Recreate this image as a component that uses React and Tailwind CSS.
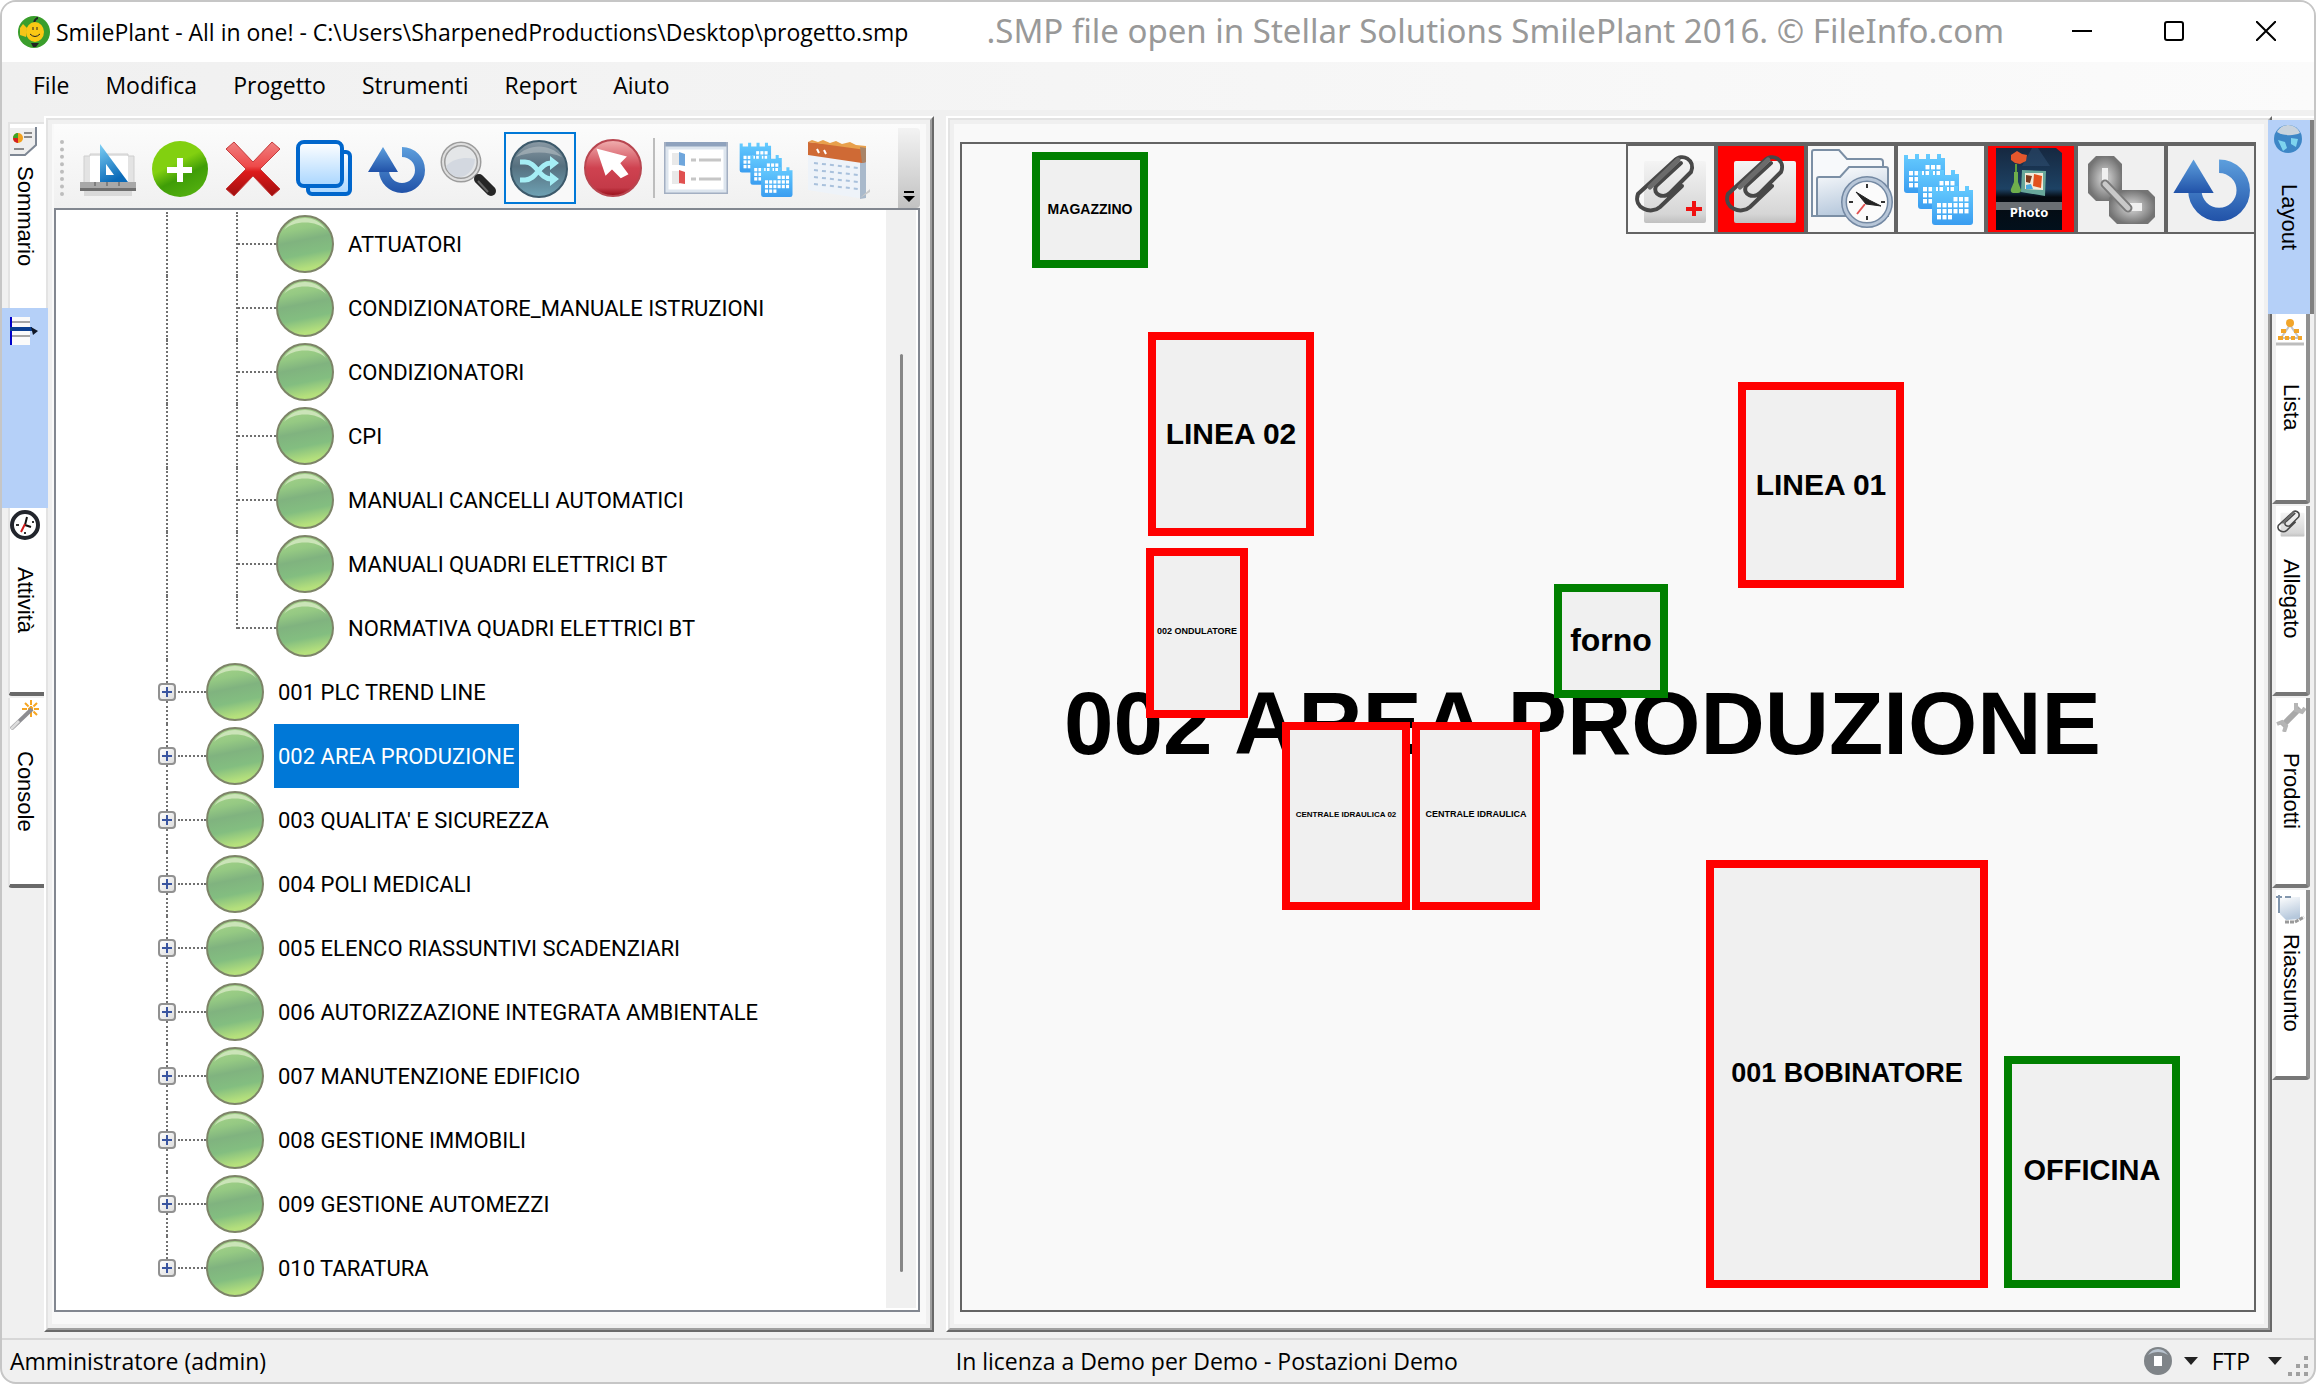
import React, { useState } from 'react';
import clsx from 'clsx';

const menuItems = ['File', 'Modifica', 'Progetto', 'Strumenti', 'Report', 'Aiuto'];

const documents = [
  'ATTUATORI',
  'CONDIZIONATORE_MANUALE ISTRUZIONI',
  'CONDIZIONATORI',
  'CPI',
  'MANUALI CANCELLI AUTOMATICI',
  'MANUALI QUADRI ELETTRICI BT',
  'NORMATIVA QUADRI ELETTRICI BT',
];

const areas = [
  '001 PLC TREND LINE',
  '002 AREA PRODUZIONE',
  "003 QUALITA' E SICUREZZA",
  '004 POLI MEDICALI',
  '005 ELENCO RIASSUNTIVI SCADENZIARI',
  '006 AUTORIZZAZIONE INTEGRATA AMBIENTALE',
  '007 MANUTENZIONE EDIFICIO',
  '008 GESTIONE IMMOBILI',
  '009 GESTIONE AUTOMEZZI',
  '010 TARATURA',
];

// machines placed on the plant layout
const nodes = [
  { label: 'MAGAZZINO', place: 'left-[70px] top-[8px] w-[116px] h-[116px] border-[#008000] text-[14px]' },
  { label: 'LINEA 02', place: 'left-[186px] top-[188px] w-[166px] h-[204px] border-[#ff0000] text-[30px]' },
  { label: '002 ONDULATORE', place: 'left-[184px] top-[404px] w-[102px] h-[170px] border-[#ff0000] text-[9px]' },
  { label: 'forno', place: 'left-[592px] top-[440px] w-[114px] h-[114px] border-[#008000] text-[32px]' },
  { label: 'LINEA 01', place: 'left-[776px] top-[238px] w-[166px] h-[206px] border-[#ff0000] text-[30px]' },
  { label: 'CENTRALE IDRAULICA 02', place: 'left-[320px] top-[578px] w-[128px] h-[188px] border-[#ff0000] text-[8px]' },
  { label: 'CENTRALE IDRAULICA', place: 'left-[450px] top-[578px] w-[128px] h-[188px] border-[#ff0000] text-[9px]' },
  { label: '001 BOBINATORE', place: 'left-[744px] top-[716px] w-[282px] h-[428px] border-[#ff0000] text-[27px]' },
  { label: 'OFFICINA', place: 'left-[1042px] top-[912px] w-[176px] h-[232px] border-[#008000] text-[29px]' },
];

function Gradients() {
  return (
    <svg width="0" height="0" className="absolute" aria-hidden="true">
      <defs>
        <linearGradient id="ball" x1="0" y1="0" x2="0.2" y2="1">
          <stop offset="0" stopColor="#a9d48b" />
          <stop offset="0.3" stopColor="#95c983" />
          <stop offset="0.5" stopColor="#80b37f" />
          <stop offset="0.75" stopColor="#83be80" />
          <stop offset="1" stopColor="#b5e07c" />
        </linearGradient>
        <linearGradient id="green" x1="0.2" y1="0" x2="0.7" y2="1">
          <stop offset="0.4" stopColor="#82d010" />
          <stop offset="0.65" stopColor="#3f9d07" />
          <stop offset="1" stopColor="#54b010" />
        </linearGradient>
        <linearGradient id="red" x1="0" y1="0" x2="0" y2="1">
          <stop offset="0" stopColor="#f08080" />
          <stop offset="0.45" stopColor="#ee4a4a" />
          <stop offset="0.55" stopColor="#dd1a1a" />
          <stop offset="1" stopColor="#a01010" />
        </linearGradient>
        <linearGradient id="redball" x1="0" y1="0" x2="0" y2="1">
          <stop offset="0" stopColor="#f0b0b0" />
          <stop offset="0.5" stopColor="#cf4250" />
          <stop offset="0.85" stopColor="#c43a48" />
          <stop offset="1" stopColor="#980c18" />
        </linearGradient>
        <linearGradient id="slate" x1="0" y1="0" x2="0" y2="1">
          <stop offset="0" stopColor="#8b9aa5" />
          <stop offset="0.45" stopColor="#56707f" />
          <stop offset="1" stopColor="#6fa3b5" />
        </linearGradient>
        <linearGradient id="sheet" x1="0" y1="0" x2="0" y2="1">
          <stop offset="0" stopColor="#ffffff" />
          <stop offset="1" stopColor="#a9d6ff" />
        </linearGradient>
        <linearGradient id="arrow" x1="0" y1="0" x2="0" y2="1">
          <stop offset="0" stopColor="#5d9fdd" />
          <stop offset="1" stopColor="#2152a8" />
        </linearGradient>
        <linearGradient id="arc" gradientUnits="userSpaceOnUse" x1="0" y1="15" x2="0" y2="61">
          <stop offset="0" stopColor="#5d9fdd" />
          <stop offset="1" stopColor="#2152a8" />
        </linearGradient>
        <linearGradient id="tri" x1="0" y1="0" x2="0.4" y2="1">
          <stop offset="0" stopColor="#7fd0f5" />
          <stop offset="1" stopColor="#0a6ab8" />
        </linearGradient>
        <linearGradient id="cal" x1="0" y1="0" x2="0" y2="1">
          <stop offset="0" stopColor="#66ccff" />
          <stop offset="1" stopColor="#3a9df0" />
        </linearGradient>
        <linearGradient id="page" x1="0" y1="0" x2="0" y2="1">
          <stop offset="0" stopColor="#f4f4f4" />
          <stop offset="0.85" stopColor="#d6d6d6" />
          <stop offset="1" stopColor="#c0c0c0" />
        </linearGradient>
        <linearGradient id="folder" x1="0" y1="0" x2="0.3" y2="1">
          <stop offset="0" stopColor="#ffffff" />
          <stop offset="1" stopColor="#b6c8dc" />
        </linearGradient>
        <radialGradient id="steel">
          <stop offset="0.3" stopColor="#bdbdbd" />
          <stop offset="1" stopColor="#747474" />
        </radialGradient>
        <linearGradient id="night" x1="0" y1="0" x2="0" y2="1">
          <stop offset="0" stopColor="#162840" />
          <stop offset="0.5" stopColor="#1d4264" />
          <stop offset="0.6" stopColor="#050a10" />
          <stop offset="1" stopColor="#02101c" />
        </linearGradient>
      </defs>
    </svg>
  );
}

function Icon({ size = 'size-[72px]', box = '0 0 72 72', children }) {
  return (
    <svg className={clsx('block shrink-0', size)} viewBox={box} fill="none" aria-hidden="true">
      {children}
    </svg>
  );
}

function RefreshShape() {
  return (
    <>
      <path d="M42 20a18 18 0 1 1-18 18" stroke="url(#arc)" strokeWidth="10" />
      <path d="M23 15l15 25H8z" fill="url(#arrow)" />
    </>
  );
}

function CalendarSheet({ x, y }) {
  const cells = [];
  for (let r = 0; r < 4; r++) {
    for (let c = 0; c < 6; c++) {
      if ((r === 0 && c < 3) || (r === 3 && c > 2)) continue;
      cells.push(<rect key={r + '-' + c} x={5 + c * 5.5} y={12 + r * 6} width="4" height="4.4" fill="#fff" />);
    }
  }
  return (
    <g transform={`translate(${x} ${y})`}>
      <path d="M0 2h4v4h7V1h4v5h7V1h4v5h7V1h4v4h4v32q0 3-3 3H3q-3 0-3-3z" fill="url(#cal)" />
      {cells}
    </g>
  );
}

function CalendarsShape() {
  return (
    <>
      <CalendarSheet x={6} y={7} />
      <CalendarSheet x={20} y={23} />
      <CalendarSheet x={34} y={39} />
    </>
  );
}

function ClipShape() {
  return (
    <>
      <rect x="16" y="15" width="62" height="62" rx="2" fill="url(#page)" />
      <g strokeLinecap="round" stroke="#484848">
        <path d="M54 40L32 61C23 69 5 62 10 48L46 15C54 6 68 14 63 26L42 47C36 53 24 49 28 40L53 17" strokeWidth="4" />
        <path d="M22 41L50 14" stroke="#6b6b6b" strokeWidth="5" />
      </g>
    </>
  );
}

const leftTools = [
  {
    name: 'Disegno',
    icon: (
      <Icon>
        <path d="M12 24h6v-2h38v2h6v28H12z" fill="#e3e3e3" stroke="#cfcfcf" />
        <path d="M18 24h38v27H18z" fill="#fff" />
        <path d="M28 12v38h28z" fill="url(#tri)" />
        <path d="M34 32v11h8z" fill="#fff" />
        <path d="M8 50h56v6H8z" fill="#a8a8a8" />
        <path d="M8 56h56v3H8z" fill="#6f6f6f" />
        <path d="M12 59h48v5H12z" fill="#d9d9d9" />
        <path d="M23 50v4M35 50v4M47 50v4" stroke="#555" />
      </Icon>
    ),
  },
  {
    name: 'Aggiungi',
    icon: (
      <Icon>
        <circle cx="36" cy="37" r="28" fill="url(#green)" />
        <path d="M36 26v24M23 38h25" stroke="#fff" strokeWidth="6" />
      </Icon>
    ),
  },
  {
    name: 'Elimina',
    icon: (
      <Icon>
        <path d="M10 17l8-7 19 20 19-20 8 7-20 20 20 20-8 7-19-20-19 20-8-7 20-20z" fill="url(#red)" stroke="#c43c3c" />
      </Icon>
    ),
  },
  {
    name: 'Copia',
    icon: (
      <Icon>
        <rect x="20" y="20" width="42" height="42" rx="4" fill="url(#sheet)" stroke="#0066cc" strokeWidth="4" />
        <rect x="10" y="10" width="44" height="44" rx="6" fill="url(#sheet)" stroke="#0066cc" strokeWidth="4" />
      </Icon>
    ),
  },
  { name: 'Aggiorna', icon: <Icon><RefreshShape /></Icon> },
  {
    name: 'Cerca',
    icon: (
      <Icon>
        <circle cx="29" cy="30" r="18" fill="#e4e6e8" stroke="#9c9c9c" strokeWidth="5" />
        <circle cx="29" cy="30" r="18" stroke="#dedede" strokeWidth="2" />
        <path d="M14 34c8-8 20-9 29-7-1 12-9 18-16 18-6 0-12-5-13-11z" fill="#d3d8e0" />
        <path d="M46 46l-3-3" stroke="#999" strokeWidth="4" />
        <path d="M47 47l12 12" stroke="#262626" strokeWidth="10" strokeLinecap="round" />
        <path d="M46 49l10 11" stroke="#666" strokeWidth="2" />
      </Icon>
    ),
  },
  {
    name: 'Mescola',
    active: true,
    icon: (
      <Icon size="size-[68px]" box="2 2 68 68">
        <circle cx="35" cy="37" r="28" fill="url(#slate)" stroke="#3d5a6b" strokeWidth="2" />
        <path d="M12 25c12-14 34-14 46 0-14-6-32-6-46 0z" fill="#b3bcc2" opacity="0.6" />
        <path d="M16 30h5c12 0 14 17 26 17h3M16 48h5c12 0 14-17 26-17h3" stroke="#a5eef5" strokeWidth="5" />
        <path d="M46 24l9 7-9 7zM46 40l9 7-9 7z" fill="#a5eef5" />
      </Icon>
    ),
  },
  {
    name: 'Seleziona',
    icon: (
      <Icon>
        <circle cx="37" cy="36" r="28" fill="url(#redball)" stroke="#b84650" strokeWidth="2" />
        <path d="M22 18l27 7-6 6 8 11-6 3-9-9-6 6z" fill="#fff" stroke="#fff" strokeWidth="2" />
      </Icon>
    ),
  },
];

const leftTools2 = [
  {
    name: 'Elenco',
    icon: (
      <Icon>
        <rect x="5" y="11" width="62" height="50" fill="#fff" stroke="#a3afc2" strokeWidth="2" />
        <path d="M6 10h60v5H6z" fill="#8fa2bd" />
        <rect x="7" y="16" width="58" height="43" stroke="#dde5ee" strokeWidth="3" />
        <path d="M12 21h8v12h-8zM12 39h8v13h-8z" fill="#e9e9e9" />
        <path d="M19 20l6 2v12l-6-1z" fill="#6fa6dc" />
        <path d="M19 38l6 2v12l-6-1z" fill="#e05050" />
        <path d="M31 28h5M39 28h22M31 47h5M39 47h22" stroke="#c6c6c6" strokeWidth="3" />
      </Icon>
    ),
  },
  { name: 'Calendari', icon: <Icon box="-4 -6 94 94"><CalendarsShape /></Icon> },
  {
    name: 'Agenda',
    icon: (
      <Icon>
        <path d="M4 22v36l50 8 8-2V28z" fill="#eef3f9" />
        <path d="M56 26h6v40l-6 1z" fill="#a9b9cb" />
        <path d="M4 10l58 6v14l-4 1L4 23z" fill="#cf6a35" />
        <path d="M4 10l4-2 6 2 5-2 7 3 6-2 6 3 8-2 6 3 10 1v4z" fill="#e8a04c" />
        <path d="M56 15l6 1v14l-4 1z" fill="#a88468" />
        <path d="M13 17l2 4M20 18l2 4" stroke="#fff" strokeWidth="2" />
        <path d="M10 31l44 5M10 38l44 5M10 45l44 5M10 52l44 5" stroke="#a9c1dc" strokeWidth="2" strokeDasharray="4 4" />
        <path d="M56 66l10-6v-3z" fill="#c9c9c9" />
      </Icon>
    ),
  },
];

const canvasTools = [
  {
    name: 'Nuovo allegato',
    icon: (
      <Icon size="size-[86px]" box="0 0 86 86">
        <ClipShape />
        <path d="M66 55v15M58 63h16" stroke="#f01010" strokeWidth="4" />
      </Icon>
    ),
  },
  { name: 'Allegati', on: true, icon: <Icon size="size-[86px]" box="0 0 86 86"><ClipShape /></Icon> },
  {
    name: 'Storico',
    icon: (
      <Icon size="size-[86px]" box="0 0 86 86">
        <path d="M4 70V6q0-2 2-2h25l8 9h33q3 0 3 3v54z" fill="#f7f9fb" stroke="#7b8fa5" strokeWidth="2" />
        <path d="M9 70V33q0-2 2-2h21l9-10h37q2 0 2 2v47z" fill="url(#folder)" stroke="#7b8fa5" strokeWidth="2" />
        <circle cx="59" cy="56" r="23" fill="#fbfbfb" stroke="#7489a3" strokeWidth="6" />
        <circle cx="59" cy="56" r="23" stroke="#b7c6d8" strokeWidth="3" />
        <path d="M59 38v4M59 70v4M41 56h4M73 56h4" stroke="#333" strokeWidth="2" />
        <path d="M48 46l13 8 12 6-15-2z" fill="#222" stroke="#222" />
        <path d="M57 58l-8 10" stroke="#e05050" strokeWidth="2" />
      </Icon>
    ),
  },
  { name: 'Calendari impianto', icon: <Icon size="size-[86px]" box="0 0 86 86"><CalendarsShape /></Icon> },
  {
    name: 'Foto',
    on: true,
    icon: (
      <Icon size="size-[86px]" box="0 0 86 86">
        <path d="M8 2h60l6 5v77H8z" fill="url(#night)" />
        <path d="M34 20h28L50 2H44z" fill="#365a80" opacity="0.4" />
        <path d="M28 18v22" stroke="#5c9c3c" strokeWidth="2" />
        <path d="M26 26h4v10l3 8q0 3-3 3h-5q-3-1-2-4l3-7z" fill="#6fae4c" />
        <path d="M23 9l6-4 5 3 5 1-1 6-6 3-5-1-4-3z" fill="#e4572c" />
        <path d="M34 24l24 1-1 25-24-4z" fill="#68a79a" />
        <path d="M37 27h18v17l-18-1z" fill="#f4ead8" />
        <path d="M46 28l8 2-1 12-8-2z" fill="#e2511d" />
        <path d="M38 29l6 1-2 7-4-1z" fill="#7c3a1e" />
        <path d="M38 39l5-1 2 5h-7z" fill="#4aa8dd" />
        <path d="M8 56h66v8H8z" fill="#6a6f74" />
        <text x="41" y="71" textAnchor="middle" fill="#fff" className="font-['Open_Sans',sans-serif] text-[13px] font-bold">Photo</text>
      </Icon>
    ),
  },
  {
    name: 'Collegamenti',
    grey: true,
    icon: (
      <Icon size="size-[86px]" box="0 0 86 86">
        <path d="M18 10h18l8 8v29l-8 8H18l-8-8V18z" fill="url(#steel)" />
        <path d="M38 44h32l7 7v20l-7 7H39l-8-8V52z" fill="url(#steel)" />
        <path d="M24 22h6v14h-6zM52 57h12v8H52z" fill="#f0f0f0" />
        <path d="M27 38l23 24" stroke="#7a7a7a" strokeWidth="9" strokeLinecap="round" />
        <path d="M27 38l23 24" stroke="#c9c9c9" strokeWidth="5" strokeLinecap="round" />
      </Icon>
    ),
  },
  { name: 'Aggiorna layout', grey: true, icon: <Icon size="size-[86px]" box="4 5 64 64"><RefreshShape /></Icon> },
];

const small = { size: 'size-[30px]', box: '0 0 30 30' };

const leftTabs = [
  {
    name: 'Sommario',
    height: 'h-[186px]',
    icon: (
      <Icon {...small}>
        <path d="M0 2h26v16l-10 11H0z" fill="#eeeeee" />
        <path d="M26 1v18L15 29H0" stroke="#7e8794" strokeWidth="2" />
        <circle cx="8" cy="12" r="5" fill="#f2a01c" />
        <path d="M8 12V7a5 5 0 0 0-5 5z" fill="#3aa52a" />
        <path d="M8 12H3a5 5 0 0 0 5 5z" fill="#d42020" />
        <path d="M14 7h8M14 11h8M4 23h10" stroke="#8a8a8a" strokeWidth="2" />
      </Icon>
    ),
  },
  {
    name: '',
    height: 'h-[200px]',
    icon: (
      <Icon {...small}>
        <path d="M1 1h19v28H1z" fill="#fafafa" />
        <path d="M2 6h18M2 20h18" stroke="#a6a6a6" strokeWidth="2" />
        <path d="M1 1v28" stroke="#0000c8" strokeWidth="2" />
        <path d="M0 13h22" stroke="#0b3f91" strokeWidth="4" />
        <path d="M21 11l7 4-5 4z" fill="#101828" />
      </Icon>
    ),
  },
  {
    name: 'Attività',
    height: 'h-[188px]',
    icon: (
      <Icon {...small}>
        <circle cx="15" cy="15" r="13" fill="#fff" stroke="#22252c" strokeWidth="4" />
        <path d="M15 15l2-8M15 15l6 2" stroke="#111" strokeWidth="2" />
        <path d="M15 14l-4 8" stroke="#d01818" strokeWidth="2" />
        <path d="M6 15h3M22 12h2M15 24v-2" stroke="#333" strokeWidth="2" />
      </Icon>
    ),
  },
  {
    name: 'Console',
    height: 'h-[190px]',
    icon: (
      <Icon {...small}>
        <path d="M21 0v18M12 9h18M15 3l12 12M27 3L15 15" stroke="#f6a522" strokeWidth="2" strokeDasharray="5 1" />
        <path d="M1 29L22 9" stroke="#8d8d92" strokeWidth="4" />
        <path d="M1 29l8-8" stroke="#dcdcdc" strokeWidth="3" />
      </Icon>
    ),
  },
];

const rightTabs = [
  {
    name: 'Layout',
    icon: (
      <Icon {...small}>
        <circle cx="14" cy="15" r="14" fill="#3d86c6" />
        <path d="M3 8C8-2 22-1 26 9c-6 3-17 3-23-1z" fill="#c9d3dd" />
        <path d="M4 16l7 2 2 6-4 3zM17 14l7 1-2 8-5-3z" fill="#7ed3ee" />
      </Icon>
    ),
  },
  {
    name: 'Lista',
    icon: (
      <Icon {...small}>
        <path d="M14 7L5 20h18z" stroke="#c4c4c4" strokeWidth="2" />
        <circle cx="14" cy="5" r="4" fill="#f2a52a" />
        <path d="M5 11h5v4H5zM18 11h5v4h-5zM2 18h5v4H2zM9 18h4v4H9zM15 18h4v4h-4zM22 18h4v4h-4z" fill="#f2a52a" />
        <path d="M0 26h28" stroke="#bdbdbd" strokeWidth="3" />
      </Icon>
    ),
  },
  { name: 'Allegato', icon: <Icon size="size-[30px]" box="4 8 78 78"><ClipShape /></Icon> },
  {
    name: 'Prodotti',
    icon: (
      <Icon {...small}>
        <path d="M6 24L24 6" stroke="#a9a9a9" strokeWidth="6" />
        <path d="M20 1v7l6 2 3-4M1 22l5-2 4 4-2 6" stroke="#b5b5b5" strokeWidth="4" />
      </Icon>
    ),
  },
  {
    name: 'Riassunto',
    icon: (
      <Icon {...small}>
        <path d="M2 3h22v22l-14 1-6-6z" fill="url(#folder)" />
        <path d="M0 3h6M9 3h6M3 1v18" stroke="#8296ad" strokeWidth="2" />
        <path d="M9 28h10l9-5" stroke="#9a9a9a" strokeWidth="3" strokeDasharray="4 1" />
      </Icon>
    ),
  },
];

function TitleBar() {
  return (
    <header className="flex h-[60px] items-center bg-white pl-[15px]">
      <svg className="size-[33px] shrink-0" viewBox="0 0 33 33" fill="none" aria-hidden="true">
        <circle cx="17" cy="16" r="16" fill="#3a9e2c" />
        <path d="M17 6q2-4 4-4" stroke="#222" strokeWidth="2" />
        <ellipse cx="18" cy="16" rx="9" ry="10" fill="#fbc814" />
        <path d="M3 12l3-4 4 4-1 9-6-2z" fill="#f5c518" />
        <path d="M16 11v3M20 11v3M13 18q5 5 10 0" stroke="#222" />
        <path d="M14 27h8l-3 4h-3z" fill="#222" />
      </svg>
      <h1 className="ml-[6px] whitespace-nowrap text-[23px] text-black">
        SmilePlant - All in one! - C:\Users\SharpenedProductions\Desktop\progetto.smp
      </h1>
      <p className="ml-auto whitespace-nowrap pb-[2px] font-['Noto_Sans',sans-serif] text-[33px] text-[#999]">
        .SMP file open in Stellar Solutions SmilePlant 2016. © FileInfo.com
      </p>
      <div className="mr-[2px] ml-[32px] flex pb-[2px]">
        <button className="flex w-[92px] justify-center" aria-label="Riduci a icona">
          <svg className="size-[20px]" viewBox="0 0 20 20"><path d="M0 10h20" stroke="#000" strokeWidth="2" /></svg>
        </button>
        <button className="flex w-[92px] justify-center" aria-label="Ingrandisci">
          <svg className="size-[20px]" viewBox="0 0 20 20" fill="none"><rect x="1" y="1" width="18" height="18" rx="2" stroke="#000" strokeWidth="2" /></svg>
        </button>
        <button className="flex w-[92px] justify-center" aria-label="Chiudi">
          <svg className="size-[20px]" viewBox="0 0 20 20"><path d="M0 0l20 20M20 0L0 20" stroke="#000" strokeWidth="2" /></svg>
        </button>
      </div>
    </header>
  );
}

function Ball() {
  return (
    <svg className="size-[58px] shrink-0" viewBox="0 0 58 58" fill="none" aria-hidden="true">
      <circle cx="29" cy="29" r="28" fill="url(#ball)" stroke="#7d8468" strokeWidth="2" />
      <path d="M8 15C17-1 41-1 50 15 41 5 17 5 8 15z" fill="#cbe4b8" />
    </svg>
  );
}

function TreeLabel({ text, selected, onSelect }) {
  return (
    <button
      onClick={() => onSelect(text)}
      className={clsx(
        "ml-[10px] h-full whitespace-nowrap px-[4px] font-['Roboto',sans-serif] text-[22px]",
        selected ? 'bg-[#0078d7] text-white' : 'text-black'
      )}
    >
      {text}
    </button>
  );
}

function Tree() {
  const [selected, setSelected] = useState('002 AREA PRODUZIONE');

  return (
    <div className="flex flex-1 border-2 border-[#828790] bg-white">
      <ul className="flex-1 overflow-hidden pt-[2px]">
        {documents.map((doc, i) => (
          <li key={doc} className="flex h-[64px] items-center">
            <span className="h-full w-[112px] shrink-0 border-r-2 border-dotted border-[#707070]" />
            <span
              className={clsx(
                'w-[70px] shrink-0 self-start border-r-2 border-dotted border-[#707070]',
                i === documents.length - 1 ? 'h-[33px]' : 'h-full'
              )}
            />
            <span className="w-[38px] shrink-0 border-t-2 border-dotted border-[#707070]" />
            <Ball />
            <TreeLabel text={doc} selected={selected === doc} onSelect={setSelected} />
          </li>
        ))}
        {areas.map((area, i) => (
          <li key={area} className="flex h-[64px] items-center">
            <div className="ml-[102px] flex h-full w-[18px] shrink-0 flex-col items-center">
              <span className="flex-1 border-l-2 border-dotted border-[#707070]" />
              <button aria-label={'Espandi ' + area} className="size-[18px] rounded-sm border-2 border-[#919191] bg-linear-to-br from-white to-[#dddddd]">
                <svg className="block size-[14px]" viewBox="0 0 14 14"><path d="M7 2v10M2 7h10" stroke="#3a55a0" strokeWidth="2" /></svg>
              </button>
              <span className={clsx('flex-1 border-l-2 border-dotted', i === areas.length - 1 ? 'border-transparent' : 'border-[#707070]')} />
            </div>
            <span className="ml-[2px] w-[28px] shrink-0 border-t-2 border-dotted border-[#707070]" />
            <Ball />
            <TreeLabel text={area} selected={selected === area} onSelect={setSelected} />
          </li>
        ))}
      </ul>
      <div className="mr-[2px] mb-[2px] flex w-[30px] shrink-0 justify-center bg-[#f0f0f0] pt-[144px] pb-[36px]">
        <span className="w-[3px] rounded-full bg-[#868686]" />
      </div>
    </div>
  );
}

function Toolbar() {
  return (
    <div className="flex h-[84px] items-center bg-linear-to-b from-[#fcfcfc] to-[#f0f0f0] pt-[4px]">
      <span className="ml-[6px] h-[56px] w-0 border-l-4 border-dotted border-[#bdbdbd]" />
      <div className="ml-[8px] flex">
        {leftTools.map((tool) => (
          <button key={tool.name} aria-label={tool.name} className={clsx('size-[72px] shrink-0', tool.active && 'border-2 border-[#0078d7] bg-[#f9f9f9]')}>
            {tool.icon}
          </button>
        ))}
        <span className="mx-[5px] my-[6px] w-[2px] bg-[#bdbdbd]" />
        {leftTools2.map((tool) => (
          <button key={tool.name} aria-label={tool.name} className="size-[72px] shrink-0">
            {tool.icon}
          </button>
        ))}
      </div>
      <button aria-label="Altri pulsanti" className="ml-auto flex h-full w-[22px] items-end justify-center rounded-r bg-linear-to-b from-[#f3f3f3] to-[#c2c2c2] pb-[4px]">
        <svg className="size-[14px]" viewBox="0 0 14 14"><path d="M2 1h10v2H2zM1 6h12l-6 6z" fill="#000" /></svg>
      </button>
    </div>
  );
}

function PlantCanvas() {
  return (
    <div className="relative flex-1 overflow-hidden border-2 border-[#646464] bg-[#f9f9f9]">
      <div className="absolute left-[102px] top-[524px] whitespace-nowrap text-[89px] leading-[110px] font-bold text-black font-['Liberation_Sans',Arial,sans-serif]">
        002 AREA PRODUZIONE
      </div>
      {nodes.map((node) => (
        <button
          key={node.label}
          className={clsx(
            "absolute flex items-center justify-center border-8 bg-[#f0f0f0] pb-[2px] font-['Liberation_Sans',Arial,sans-serif] font-bold whitespace-nowrap text-black",
            node.place
          )}
        >
          {node.label}
        </button>
      ))}
      <div className="absolute top-0 right-0 flex border-l-2 border-[#646464]">
        {canvasTools.map((tool, i) => (
          <button
            key={tool.name}
            aria-label={tool.name}
            className={clsx(
              'h-[90px] shrink-0 border-y-2 border-[#646464]',
              i < canvasTools.length - 1 && 'border-r-4',
              tool.on ? 'bg-[#ff0000]' : tool.grey ? 'bg-[#f0f0f0]' : 'bg-[#f9f9f9]'
            )}
          >
            {tool.icon}
          </button>
        ))}
      </div>
    </div>
  );
}

function TabLabel({ text }) {
  return (
    <span className="flex flex-1 items-center justify-center pb-[34px] font-['Liberation_Sans',Arial,sans-serif] text-[22px] text-black [writing-mode:vertical-rl]">
      {text}
    </span>
  );
}

function LeftTabs() {
  return (
    <nav className="flex flex-col pt-[6px]">
      {leftTabs.map((tab, i) => (
        <button
          key={i}
          aria-label={tab.name || 'Struttura'}
          className={clsx(
            'relative flex shrink-0 flex-col items-center',
            tab.height,
            tab.name ? 'ml-[6px] w-[36px] border-l-2 border-l-[#e3e3e3] bg-white pr-[4px]' : 'z-10 w-[46px] bg-[#b5d0f8] pt-[6px]',
            i === 0 && 'border-t-2 border-[#e3e3e3]',
            i > 1 && 'mb-[2px] rounded-bl border-b-4 border-b-[#696969]'
          )}
        >
          <span className="h-[34px] pt-[2px]">{tab.icon}</span>
          <TabLabel text={tab.name} />
        </button>
      ))}
    </nav>
  );
}

function RightTabs() {
  return (
    <nav className="flex flex-col border-t-2 border-white pt-[2px]">
      {rightTabs.map((tab, i) => (
        <button
          key={tab.name}
          className={clsx(
            'relative flex shrink-0 flex-col items-center',
            i === 0
              ? 'z-10 -ml-[4px] h-[194px] w-[46px] border-r-4 border-[#808080] bg-[#b5d0f8]'
              : 'mb-[2px] h-[190px] w-[38px] rounded-br border-r-4 border-b-4 border-l-4 border-r-[#909090] border-b-[#777] border-l-[#f0f0f0] bg-white'
          )}
        >
          <span className="h-[34px] pt-[4px]">{tab.icon}</span>
          <TabLabel text={tab.name} />
        </button>
      ))}
    </nav>
  );
}

function Panel({ className, inner, children }) {
  return (
    <section className={clsx('flex flex-col border-2 border-t-white border-r-[#696969] border-b-[#696969] border-l-white', className)}>
      <div className="flex flex-1 flex-col border-2 border-t-[#e3e3e3] border-r-[#a0a0a0] border-b-[#a0a0a0] border-l-[#e3e3e3]">
        <div className={clsx('flex flex-1 flex-col border-4 border-[#f0f0f0] bg-[#f9f9f9] pb-[12px]', inner)}>{children}</div>
      </div>
    </section>
  );
}

function StatusBar() {
  return (
    <footer className="grid h-[44px] grid-cols-[949fr_1363fr] items-center border-t-2 border-[#d7d7d7] pl-[8px] text-[23px] text-black">
      <span>Amministratore (admin)</span>
      <div className="flex items-center">
        <span>In licenza a Demo per Demo - Postazioni Demo</span>
        <button aria-label="Stato" className="ml-auto flex items-center gap-[12px]">
          <svg className="size-[28px]" viewBox="0 0 28 28">
            <circle cx="14" cy="14" r="14" fill="#7f8488" />
            <path d="M4 8C9 0 19 0 24 8 18 4 10 4 4 8z" fill="#b9c4cf" />
            <path d="M10 9h8v10h-8z" fill="#fff" />
          </svg>
          <svg className="h-[8px] w-[14px]" viewBox="0 0 14 8"><path d="M0 0h14L7 8z" fill="#222" /></svg>
        </button>
        <button className="ml-[14px] flex items-center gap-[18px]">
          FTP
          <svg className="h-[8px] w-[14px]" viewBox="0 0 14 8"><path d="M0 0h14L7 8z" fill="#222" /></svg>
        </button>
        <svg className="mr-[4px] ml-[6px] size-[22px] self-end" viewBox="0 0 22 22" aria-hidden="true">
          <path d="M16 0h4v4h-4zM8 8h4v4H8zM16 8h4v4h-4zM0 16h4v4H0zM8 16h4v4H8zM16 16h4v4h-4z" fill="#a0a0a0" />
        </svg>
      </div>
    </footer>
  );
}

export default function App() {
  return (
    <div className="bg-white font-['Open_Sans',sans-serif]">
      <Gradients />
      <div className="flex min-h-screen flex-col overflow-hidden rounded-2xl border-2 border-[#c6c6c6] bg-[#f0f0f0]">
        <TitleBar />
        <nav className="flex h-[48px] items-center gap-[36px] bg-linear-to-r from-[#f0f0f0] to-[#fbfbfb] pb-[2px] pl-[31px] text-[23px] text-black">
          {menuItems.map((item) => (
            <button key={item}>{item}</button>
          ))}
        </nav>
        <main className="grid flex-1 grid-cols-[42px_minmax(0,890fr)_minmax(0,1338fr)_42px] py-[6px]">
          <LeftTabs />
          <Panel inner="pl-[2px] pr-[6px]">
            <Toolbar />
            <Tree />
          </Panel>
          <Panel className="ml-[12px]" inner="pt-[18px] pl-[6px] pr-[8px]">
            <PlantCanvas />
          </Panel>
          <RightTabs />
        </main>
        <StatusBar />
      </div>
    </div>
  );
}
